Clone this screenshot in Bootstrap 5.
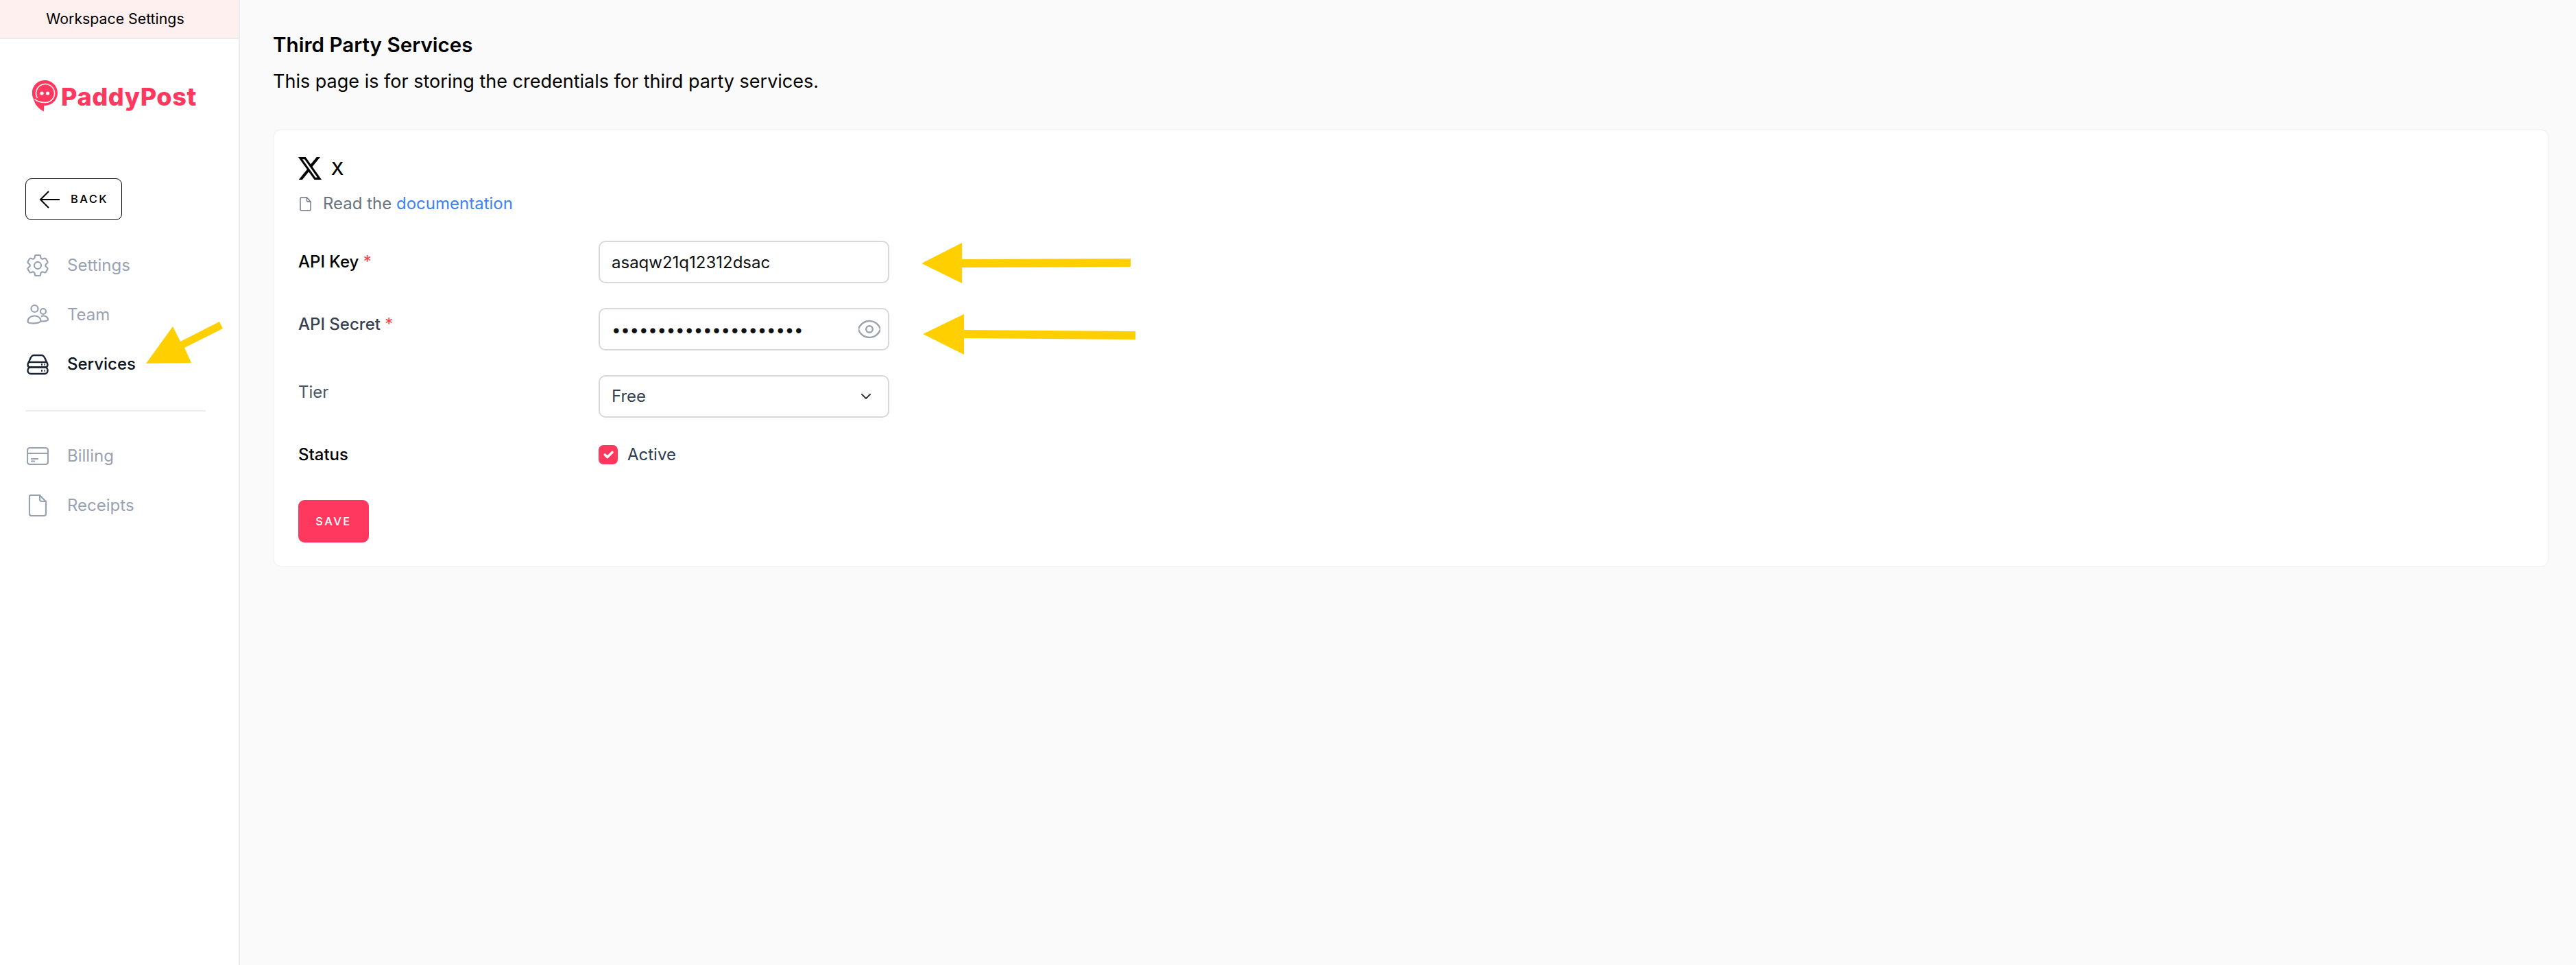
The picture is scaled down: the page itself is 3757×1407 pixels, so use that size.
<!DOCTYPE html>
<html lang="en">
<head>
    <meta charset="UTF-8">
    <title>Third Party Services</title>
    <link href="https://cdn.jsdelivr.net/npm/bootstrap@5.3.3/dist/css/bootstrap.min.css" rel="stylesheet">
    <style>
        body { font-family: Inter, "Liberation Sans", sans-serif; background: #fafafa; color: #000; min-height: 1407px; }
        .side-bar { width: 350px; min-height: 1407px; background: #fff; border-right: 2px solid #ebebf2; }
        .side-head { height: 57px; background: #fff0f0; border-bottom: 2px solid #ebebf2; font-size: 21.3px; padding-right: 12px; }
        .logo-wrap { padding: 60px 0 0 47px; height: 203px; gap: 4px; }
        .logo-name { font-size: 36px; font-weight: 800; color: #ff385f; line-height: 45px; margin-top: 2px; letter-spacing: .6px; }
        .back-btn { width: 141px; height: 61px; margin-left: 37px; border: 1px solid #000; border-radius: 9px; gap: 16px; font-size: 16.5px; font-weight: 500; letter-spacing: 2.4px; color: #000; padding: 0; }
        .side-nav { padding: 30px 0 0 39px; }
        .side-nav .nav-link { height: 72px; padding: 0; gap: 27px; font-size: 24px; color: #98a2b3; }
        .side-nav .nav-link.active { color: #0b1220; font-weight: 500; }
        .side-rule { width: 263px; height: 2px; margin: 31px 0 29px -2px; background: #ebebf2; }
        .nav-ico { width: 32px; height: 32px; flex: none; }
        .main-pane { padding: 0 39px 0 48px; }
        .page-title { font-size: 29.6px; font-weight: 600; line-height: 36px; margin: 47px 0 18px; }
        .page-sub { font-size: 27px; line-height: 36px; margin: 0 0 51px; }
        .svc-card { border: 2px solid #f5f5f5; border-radius: 12px; padding: 39px 35px 34px; }
        .svc-head { height: 33px; gap: 14px; font-size: 26px; font-weight: 500; }
        .doc-line { margin: 23px 0 42px 2px; height: 24px; gap: 17px; font-size: 24px; color: #6b7280; line-height: 24px; }
        .doc-line a { color: #3b82f6; text-decoration: none; }
        .fld-row { margin-bottom: 36px; }
        .fld-label { width: 438px; padding-top: 9px; font-size: 24px; font-weight: 500; line-height: 30px; color: #374151; margin: 0; }
        .fld-label.key { padding-top: 16px; color: #000; }
        .fld-label.plain { padding-top: 10px; color: #4b5563; font-weight: 400; }
        .req { color: #ef4444; font-weight: 400; }
        .fld-box { width: 424px; }
        .fld-box .form-control, .fld-box .form-select { height: 62px; font-size: 24px; border: 2px solid #d8d8dc; border-radius: 10px; padding: 0 17px; color: #111; box-shadow: none; }
        .fld-box .form-select { color: #374151; background-position: right 22px center; background-size: 20px 16px; }
        .fld-box input[type=password] { letter-spacing: -.2px; }
        .eye-ico { position: absolute; top: 15px; right: 13px; width: 32px; height: 32px; }
        .status-row { margin-top: 40px; height: 28px; }
        .status-row .fld-label { padding: 0; line-height: 28px; color: #000; }
        .check-line { margin: 0; padding: 0; min-height: 0; gap: 14px; font-size: 24px; color: #2f3b52; line-height: 28px; }
        .check-line .form-check-input { float: none; width: 28px; height: 28px; margin: 0; background-color: #ff385f; border: 0; border-radius: 7px; background-size: 24px; }
        .save-btn { width: 103px; height: 62px; margin-top: 52px; background: #ff385f; border: 0; border-radius: 9px; color: #fff; font-size: 16.5px; font-weight: 500; letter-spacing: 2.4px; padding: 0; }
        .note-arrows { position: absolute; left: 0; top: 0; width: 3757px; height: 1407px; pointer-events: none; }
    </style>
</head>
<body>

    <div class="d-flex">
        <!-- Sidebar -->
        <aside class="side-bar flex-shrink-0">
            <div class="side-head d-flex align-items-center justify-content-center">Workspace Settings</div>
            <div class="logo-wrap d-flex align-items-start">
                <svg width="38" height="46" viewBox="0 0 38 46">
                    <path fill="#ff385f" d="M18.500 0A18.500 18.500 0 0 1 18.500 37c-.4 0-.8 0-1.200 0L17 45.500C10 42 3.800 36 1.800 27A18.500 18.500 0 0 1 18.500 0Z"/>
                    <path fill="none" stroke="#fff" stroke-width="1.500" d="M3.500 27.500C7 31 11 32.500 20 32.500A13.500 13.500 0 1 0 7.500 26"/>
                    <circle cx="14" cy="19" r="2.600" fill="#fff"/>
                    <circle cx="22.500" cy="19" r="2.600" fill="#fff"/>
                </svg>
                <span class="logo-name">PaddyPost</span>
            </div>
            <a href="#" class="btn back-btn d-flex align-items-center justify-content-center">
                <svg width="30" height="26" viewBox="0 0 30 26" fill="none" stroke="#000" stroke-width="2"><path d="M30 13H2M14 1 2 13l12 12"/></svg>
                <span>BACK</span>
            </a>

            <nav class="side-nav nav flex-column">
                <a class="nav-link d-flex align-items-center" href="#">
                    <svg class="nav-ico" viewBox="2.500 2.500 19 19" fill="none" stroke="#98a2b3" stroke-width="1.300"><path d="M9.594 3.940c.09-.542.56-.94 1.110-.94h2.593c.55 0 1.020.398 1.110.94l.213 1.281c.063.374.313.686.645.87.074.04.147.083.22.127.325.196.72.257 1.075.124l1.217-.456a1.125 1.125 0 0 1 1.370.49l1.296 2.247a1.125 1.125 0 0 1-.26 1.431l-1.003.827c-.293.241-.438.613-.43.992a7.723 7.723 0 0 1 0 .255c-.008.378.137.75.43.991l1.004.827c.424.35.534.955.26 1.430l-1.298 2.247a1.125 1.125 0 0 1-1.369.491l-1.217-.456c-.355-.133-.75-.072-1.076.124a6.470 6.470 0 0 1-.22.128c-.331.183-.581.495-.644.869l-.213 1.281c-.09.543-.56.94-1.110.94h-2.594c-.55 0-1.019-.398-1.110-.94l-.213-1.281c-.062-.374-.312-.686-.644-.87a6.520 6.520 0 0 1-.22-.127c-.325-.196-.72-.257-1.076-.124l-1.217.456a1.125 1.125 0 0 1-1.369-.49l-1.297-2.247a1.125 1.125 0 0 1 .26-1.431l1.004-.827c.292-.24.437-.613.43-.991a6.932 6.932 0 0 1 0-.255c.007-.38-.138-.751-.43-.992l-1.004-.827a1.125 1.125 0 0 1-.26-1.430l1.297-2.247a1.125 1.125 0 0 1 1.370-.491l1.216.456c.356.133.751.072 1.076-.124.072-.044.146-.086.22-.128.332-.183.582-.495.644-.869l.214-1.280Z"/><circle cx="12" cy="12" r="3"/></svg>
                    Settings
                </a>
                <a class="nav-link d-flex align-items-center" href="#">
                    <svg class="nav-ico" viewBox="0 0 32 32" fill="none" stroke="#98a2b3" stroke-width="2.200"><circle cx="11.500" cy="7" r="5"/><circle cx="24" cy="11" r="4"/><path d="M1.500 26c0-5 4-8.500 9.500-8.500 4 0 7 1.500 9 4.500.8 1.500.5 4-1.500 5-3 1.500-11 1.800-15 .8-1.300-.3-2-.8-2-1.800Z"/><path d="M21 18.500c1-.7 2-1 3.500-1 3.800 0 6.500 2.500 6.500 5.500 0 1.500-3 2.500-10.500 2.500"/></svg>
                    Team
                </a>
                <a class="nav-link active d-flex align-items-center" href="#">
                    <svg class="nav-ico" viewBox="0 0 32 32" fill="none" stroke="#1a2433" stroke-width="2.400"><path d="M1.500 17c0-2 1-3 2-5C5 8 6.500 3 10 3h12c3.500 0 5 5 6.500 9 1 2 2 3 2 5 0 2-1.500 3.500-3.500 3.500H5c-2 0-3.500-1.500-3.500-3.500Z"/><rect x="1.500" y="20.500" width="29" height="9.500" rx="4.500"/><path d="M1.800 13h28.400"/><path stroke-dasharray="2 2.500" d="M21 16.500h6M21 25.500h6"/></svg>
                    Services
                </a>
                <div class="side-rule"></div>
                <a class="nav-link d-flex align-items-center" href="#">
                    <svg class="nav-ico" viewBox="0 0 32 32" fill="none" stroke="#98a2b3" stroke-width="2.200"><rect x="1" y="4" width="30" height="24" rx="3.500"/><path d="M1 12h30M6 20h11M6 23.500h6"/></svg>
                    Billing
                </a>
                <a class="nav-link d-flex align-items-center" href="#">
                    <svg class="nav-ico" viewBox="0 0 32 32" fill="none" stroke="#98a2b3" stroke-width="2.200"><path d="M6 1h13l9 9.500V28a3 3 0 0 1-3 3H7a3 3 0 0 1-3-3V3a2 2 0 0 1 2-2Z"/><path d="M19 1v6a3 3 0 0 0 3 3h6"/></svg>
                    Receipts
                </a>
            </nav>
        </aside>

        <!-- Contenido -->
        <main class="main-pane flex-grow-1">
            <h1 class="page-title">Third Party Services</h1>
            <p class="page-sub">This page is for storing the credentials for third party services.</p>

            <div class="card svc-card">
                <div class="svc-head d-flex align-items-center">
                    <svg width="34" height="33" viewBox="0 1.150 24 21.700" preserveAspectRatio="none"><path fill="#000" d="M18.901 1.153h3.680l-8.040 9.190L24 22.846h-7.406l-5.800-7.584-6.638 7.584H.474l8.600-9.830L0 1.154h7.594l5.243 6.932ZM17.610 20.644h2.039L6.486 3.240H4.298Z"/></svg>
                    <span>X</span>
                </div>
                <div class="doc-line d-flex align-items-center">
                    <svg width="17" height="21" viewBox="0 0 17 21" fill="none" stroke="#6b7280" stroke-width="1.400"><path d="M2.500 1h8L16 7v11.500a1.500 1.500 0 0 1-1.500 1.500h-12A1.500 1.500 0 0 1 1 18.500v-16A1.500 1.500 0 0 1 2.500 1Z"/><path d="M10.500 1v4.500A1.500 1.500 0 0 0 12 7h4"/></svg>
                    <span>Read the <a href="#">documentation</a></span>
                </div>

                <div class="fld-row d-flex">
                    <label class="fld-label key">API Key <span class="req">*</span></label>
                    <div class="fld-box"><input class="form-control" type="text" value="asaqw21q12312dsac"></div>
                </div>
                <div class="fld-row d-flex">
                    <label class="fld-label">API Secret <span class="req">*</span></label>
                    <div class="fld-box position-relative">
                        <input class="form-control" type="password" value="asaqw21q12312dsacabcd">
                        <svg class="eye-ico" viewBox="2 2 20 20" fill="none" stroke="#9ca3af" stroke-width="1.500"><path d="M2.036 12.322a1.012 1.012 0 0 1 0-.639C3.423 7.510 7.360 4.500 12 4.500c4.638 0 8.573 3.007 9.963 7.178.07.207.07.431 0 .639C20.577 16.490 16.640 19.500 12 19.500c-4.638 0-8.573-3.007-9.963-7.178Z"/><circle cx="12" cy="12" r="3"/></svg>
                    </div>
                </div>
                <div class="d-flex">
                    <label class="fld-label plain">Tier</label>
                    <div class="fld-box">
                        <select class="form-select">
                            <option selected>Free</option>
                            <option>Basic</option>
                            <option>Pro</option>
                        </select>
                    </div>
                </div>
                <div class="status-row d-flex">
                    <label class="fld-label">Status</label>
                    <div class="form-check check-line d-flex align-items-center">
                        <input class="form-check-input" type="checkbox" id="activeCheck" checked>
                        <label for="activeCheck">Active</label>
                    </div>
                </div>
                <div><button type="button" class="btn save-btn">SAVE</button></div>
            </div>
        </main>
    </div>

    <!-- Flechas de anotación sobre la captura -->
    <svg class="note-arrows" viewBox="0 0 3757 1407" fill="#ffcf00">
        <path d="M1344 384 1403 354V378L1649 377V389L1403 390V413Z"/>
        <path d="M1346 487 1406 458V481L1656 483V495L1406 493V517Z"/>
        <path d="M213 530 252 476 263 498 320 469 325 479 269 507 279 529Z"/>
    </svg>

    <script src="https://cdn.jsdelivr.net/npm/bootstrap@5.3.3/dist/js/bootstrap.bundle.min.js"></script>
</body>
</html>
